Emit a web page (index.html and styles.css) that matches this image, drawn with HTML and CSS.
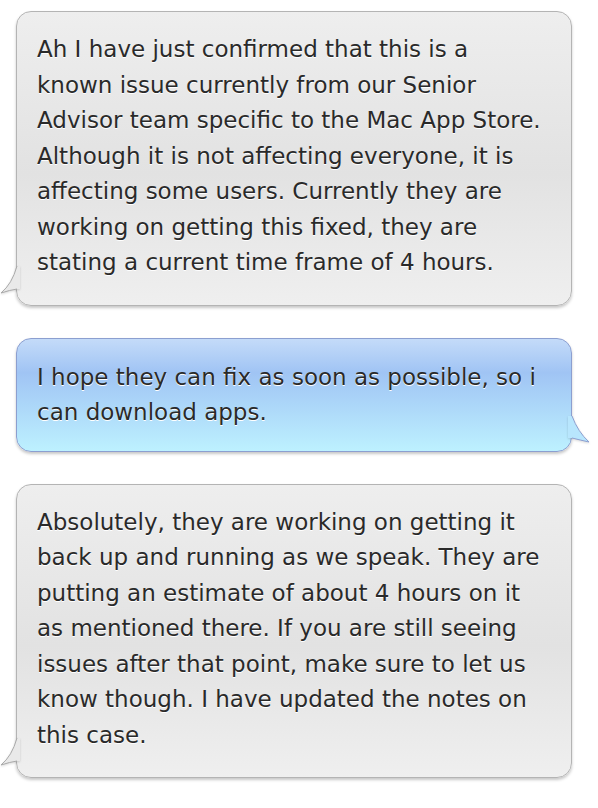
FILE: index.html
```html
<!DOCTYPE html>
<html lang="en">
	<head>
		<meta charset="UTF-8" />
		<meta name="viewport" content="width=device-width, initial-scale=1.0" />
		<title>Chat</title>
		<link rel="stylesheet" href="styles.css">
	</head>
	<body>
		<div class="chat">
			<div class="bubble bubble-in">
				<p>Ah I have just confirmed that this is a<br>
				known issue currently from our Senior<br>
				Advisor team specific to the Mac App Store.<br>
				Although it is not affecting everyone, it is<br>
				affecting some users. Currently they are<br>
				working on getting this fixed, they are<br>
				stating a current time frame of 4 hours.</p>
				<svg class="tail tail-left" width="20" height="34" viewBox="0 0 20 34">
					<path d="M17 4 Q12 22 1 31 Q10 28 17 27 L20 27 L20 4 Z" fill="#e9e9e9" />
					<path d="M17 4 Q12 22 1 31 Q10 28 17 27" fill="none" stroke="#a9a9a9" stroke-width="1" />
				</svg>
			</div>

			<div class="bubble bubble-out">
				<p>I hope they can fix as soon as possible, so i<br>
				can download apps.</p>
				<svg class="tail tail-right" width="30" height="40" viewBox="0 0 30 40">
					<path d="M0 6 L4 6 Q10 22 21 32 Q12 30 4 28 L0 28 Z" fill="#b8e6fd" />
					<path d="M4 6 Q10 22 21 32 Q12 30 4 28" fill="none" stroke="#8c9fd0" stroke-width="1" />
				</svg>
			</div>

			<div class="bubble bubble-in">
				<p>Absolutely, they are working on getting it<br>
				back up and running as we speak. They are<br>
				putting an estimate of about 4 hours on it<br>
				as mentioned there. If you are still seeing<br>
				issues after that point, make sure to let us<br>
				know though. I have updated the notes on<br>
				this case.</p>
				<svg class="tail tail-left" width="20" height="34" viewBox="0 0 20 34">
					<path d="M17 4 Q12 22 1 31 Q10 28 17 27 L20 27 L20 4 Z" fill="#e9e9e9" />
					<path d="M17 4 Q12 22 1 31 Q10 28 17 27" fill="none" stroke="#a9a9a9" stroke-width="1" />
				</svg>
			</div>
		</div>
	</body>
</html>
```

FILE: styles.css
```css
body {
	margin: 0;
	background: #ffffff;
	font-family: "DejaVu Sans", "Noto Sans", sans-serif;
}

.chat {
	display: flex;
	flex-direction: column;
	gap: 32px;
	padding: 11px 26px 20px 16px;
}

.bubble {
	position: relative;
	border-radius: 15px;
	padding: 20px 8px 24px 20px;
	box-shadow: 0 2px 3px rgba(0, 0, 0, 0.22);
}

.bubble p {
	margin: 0;
	font-size: 23px;
	line-height: 35.5px;
	color: #2a2a2a;
	text-shadow: 0 1px 0 #ffffff;
}

.bubble-in {
	border: 1px solid #b4b4b4;
	background: linear-gradient(#eeeeee, #e2e2e2 55%, #efefef);
}

.bubble-out {
	padding-top: 21px;
	padding-bottom: 20px;
	border: 1px solid #8c9fd0;
	background: linear-gradient(#c4dbf9, #a0c4f4 30%, #bdf1ff);
}

/* tails sit over the bubble border */
.tail {
	position: absolute;
	display: block;
	filter: drop-shadow(0 1px 1px rgba(0, 0, 0, 0.15));
}

.tail-left {
	left: -17px;
	bottom: 9px;
}

.tail-right {
	right: -27px;
	bottom: 1px;
}
```
